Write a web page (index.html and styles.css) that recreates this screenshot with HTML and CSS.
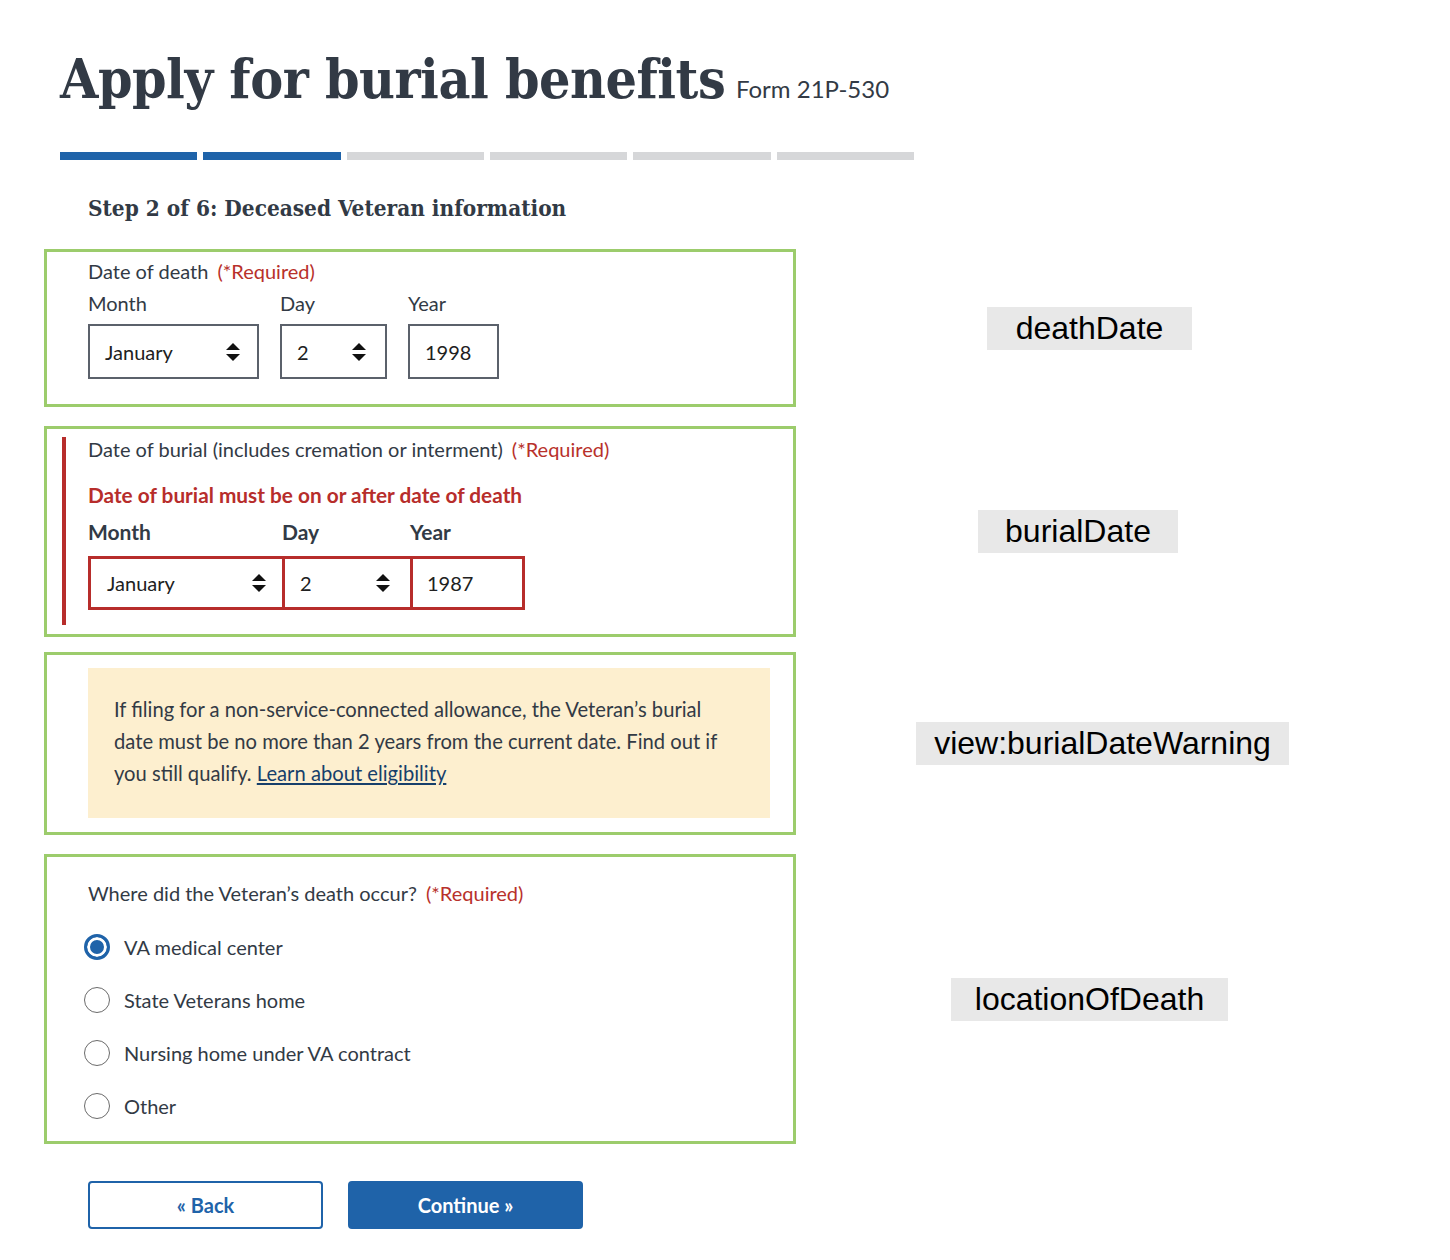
FILE: index.html
```html
<!DOCTYPE html>
<html lang="en">
<head>
<meta charset="utf-8">
<title>Apply for burial benefits</title>
<link rel="stylesheet" href="styles.css">
</head>
<body>
<main class="page">
  <header class="page-head">
    <h1 class="title">Apply for burial benefits <span class="form-no">Form 21P-530</span></h1>
    <div class="progress">
      <span class="seg seg-done"></span>
      <span class="seg seg-done"></span>
      <span class="seg"></span>
      <span class="seg"></span>
      <span class="seg"></span>
      <span class="seg"></span>
    </div>
    <h2 class="step">Step 2 of 6: Deceased Veteran information</h2>
  </header>

  <section class="row row-death">
    <div class="box box-death">
      <div class="q-label">Date of death <span class="req">(*Required)</span></div>
      <div class="date-group">
        <div class="date-col">
          <div class="sub-label">Month</div>
          <div class="field field-month"><span>January</span><svg class="arrows" width="14" height="18" viewBox="0 0 14 18"><polygon points="0,7 7,0 14,7"/><polygon points="0,11 7,18 14,11"/></svg></div>
        </div>
        <div class="date-col">
          <div class="sub-label">Day</div>
          <div class="field field-day"><span>2</span><svg class="arrows" width="14" height="18" viewBox="0 0 14 18"><polygon points="0,7 7,0 14,7"/><polygon points="0,11 7,18 14,11"/></svg></div>
        </div>
        <div class="date-col">
          <div class="sub-label">Year</div>
          <div class="field field-year"><span>1998</span></div>
        </div>
      </div>
    </div>
    <div class="tag tag-death">deathDate</div>
  </section>

  <section class="row row-burial">
    <div class="box box-burial">
      <div class="error-wrap">
        <div class="q-label q-label-up">Date of burial (includes cremation or interment) <span class="req">(*Required)</span></div>
        <div class="error-msg">Date of burial must be on or after date of death</div>
        <div class="date-group date-group-err">
          <div class="date-col">
            <div class="sub-label sub-label-bold">Month</div>
            <div class="field field-err field-err-month"><span>January</span><svg class="arrows" width="14" height="18" viewBox="0 0 14 18"><polygon points="0,7 7,0 14,7"/><polygon points="0,11 7,18 14,11"/></svg></div>
          </div>
          <div class="date-col date-col-join">
            <div class="sub-label sub-label-bold">Day</div>
            <div class="field field-err field-err-day"><span>2</span><svg class="arrows" width="14" height="18" viewBox="0 0 14 18"><polygon points="0,7 7,0 14,7"/><polygon points="0,11 7,18 14,11"/></svg></div>
          </div>
          <div class="date-col date-col-join">
            <div class="sub-label sub-label-bold">Year</div>
            <div class="field field-err field-err-year"><span>1987</span></div>
          </div>
        </div>
      </div>
    </div>
    <div class="tag tag-burial">burialDate</div>
  </section>

  <section class="row row-warning">
    <div class="box box-warning">
      <div class="warning">
        If filing for a non-service-connected allowance, the Veteran’s burial<br>
        date must be no more than 2 years from the current date. Find out if<br>
        you still qualify. <a class="link" href="#">Learn about eligibility</a>
      </div>
    </div>
    <div class="tag tag-warning">view:burialDateWarning</div>
  </section>

  <section class="row row-location">
    <div class="box box-location">
      <div class="q-label">Where did the Veteran’s death occur? <span class="req">(*Required)</span></div>
      <div class="radios">
        <label class="radio-row"><span class="radio radio-on"></span><span>VA medical center</span></label>
        <label class="radio-row"><span class="radio"></span><span>State Veterans home</span></label>
        <label class="radio-row"><span class="radio"></span><span>Nursing home under VA contract</span></label>
        <label class="radio-row"><span class="radio"></span><span>Other</span></label>
      </div>
    </div>
    <div class="tag tag-location">locationOfDeath</div>
  </section>

  <div class="actions">
    <button class="btn btn-back" type="button">« Back</button>
    <button class="btn btn-continue" type="button">Continue »</button>
  </div>
</main>
</body>
</html>
```

FILE: styles.css
```css
* { box-sizing: border-box; }

body {
  margin: 0;
  background: #ffffff;
  color: #323a45;
  font-family: Lato, "Liberation Sans", sans-serif;
}

.page {
  padding: 0 0 40px 44px;
}

.page-head {
  padding-left: 16px;
}

.title {
  margin: 0;
  padding-top: 49px;
  font-family: "DejaVu Serif Condensed", "DejaVu Serif", serif;
  font-stretch: condensed;
  font-weight: 700;
  font-size: 55px;
  line-height: 60px;
  color: #323a45;
  letter-spacing: -0.5px;
}

.form-no {
  font-family: Lato, "Liberation Sans", sans-serif;
  font-weight: 400;
  font-size: 24px;
  letter-spacing: 0;
  margin-left: -6px;
}

.progress {
  display: flex;
  gap: 6px;
  width: 854px;
  margin-top: 33px;
}

.seg {
  flex: 1;
  height: 8px;
  background: #d6d7d9;
}

.seg-done {
  background: #1f63a9;
}

.step {
  margin: 34px 0 0 28px;
  font-family: "DejaVu Serif Condensed", "DejaVu Serif", serif;
  font-stretch: condensed;
  font-weight: 700;
  font-size: 22.4px;
  line-height: 28px;
  color: #323a45;
}

.row {
  display: grid;
  grid-template-columns: 752px 1fr;
  align-items: center;
}

.row-death { margin-top: 27px; }
.row-burial { margin-top: 19px; }
.row-warning { margin-top: 15px; }
.row-location { margin-top: 19px; }

.box {
  border: 3px solid #9ccc6c;
  padding-left: 41px;
}

.box-death {
  padding-top: 7px;
  padding-bottom: 25px;
}

.q-label {
  font-size: 20px;
  line-height: 24px;
}

.req {
  color: #b8312b;
  margin-left: 4px;
}

.date-group {
  display: flex;
  gap: 21px;
  margin-top: 8px;
}

.date-col {
  display: flex;
  flex-direction: column;
}

.sub-label {
  font-size: 20px;
  line-height: 24px;
}

.field {
  margin-top: 9px;
  height: 55px;
  border: 2px solid #5b616b;
  display: flex;
  align-items: center;
  justify-content: space-between;
  padding: 0 17px 0 15px;
  font-size: 20px;
  color: #212121;
  background: #fff;
}

.field-month { width: 171px; }
.field-day { width: 107px; padding-right: 19px; }
.field-year { width: 91px; }

.arrows polygon { fill: #111; }

/* burial date with error */
.box-burial {
  padding-left: 15px;
  padding-top: 22px;
  padding-bottom: 9px;
}

.error-wrap {
  border-left: 4px solid #b72d2b;
  padding-left: 22px;
  padding-bottom: 15px;
}

.q-label-up {
  margin-top: -14px;
}

.error-msg {
  margin-top: 22px;
  font-size: 20.8px;
  line-height: 24px;
  font-weight: 700;
  color: #b72d2b;
}

.date-group-err {
  gap: 0;
  margin-top: 13px;
}

.date-col-join { margin-left: -3px; }

.sub-label-bold {
  font-weight: 700;
  font-size: 21px;
  color: #323a45;
}

.field-err {
  margin-top: 12px;
  height: 54px;
  border: 3px solid #b72d2b;
}

.field-err-month { width: 197px; padding: 0 16px 0 16px; }
.field-err-day { width: 131px; padding: 0 20px 0 15px; }
.field-err-year { width: 115px; padding: 0 14px 0 14px; }

/* warning */
.box-warning {
  padding: 13px 23px 14px 41px;
}

.warning {
  background: #fdefcf;
  padding: 25px 20px 29px 26px;
  font-size: 20.2px;
  line-height: 32px;
  color: #323a45;
}

.link {
  color: #173f6b;
  text-decoration: underline;
}

/* location radios */
.box-location {
  padding-top: 24px;
  padding-bottom: 22px;
}

.radios {
  display: flex;
  flex-direction: column;
  gap: 27px;
  margin-top: 29px;
  margin-left: -4px;
}

.radio-row {
  display: flex;
  align-items: center;
  gap: 14px;
  height: 26px;
  font-size: 20px;
}

.radio {
  width: 26px;
  height: 26px;
  border-radius: 50%;
  border: 1.5px solid #6b6b6b;
  background: #fff;
  flex: none;
}

.radio-on {
  border: 3px solid #1f63a9;
  background: #1f63a9;
  box-shadow: inset 0 0 0 3px #fff;
}

/* tags */
.tag {
  justify-self: start;
  height: 43px;
  background: #e8e8e8;
  font-family: "Liberation Sans", Arial, sans-serif;
  font-size: 32px;
  line-height: 43px;
  text-align: center;
  color: #000;
}

.tag-death { width: 205px; margin-left: 191px; }
.tag-burial { width: 200px; margin-left: 182px; }
.tag-warning { width: 373px; margin-left: 120px; }
.tag-location { width: 277px; margin-left: 155px; }

/* buttons */
.actions {
  display: flex;
  gap: 25px;
  margin-top: 37px;
  margin-left: 44px;
}

.btn {
  width: 235px;
  height: 48px;
  border-radius: 4px;
  font-family: Lato, "Liberation Sans", sans-serif;
  font-size: 20px;
  font-weight: 700;
  cursor: pointer;
}

.btn-back {
  background: #fff;
  color: #1f63a9;
  border: 2px solid #1f63a9;
}

.btn-continue {
  background: #1f63a9;
  color: #fff;
  border: 2px solid #1f63a9;
}
```
